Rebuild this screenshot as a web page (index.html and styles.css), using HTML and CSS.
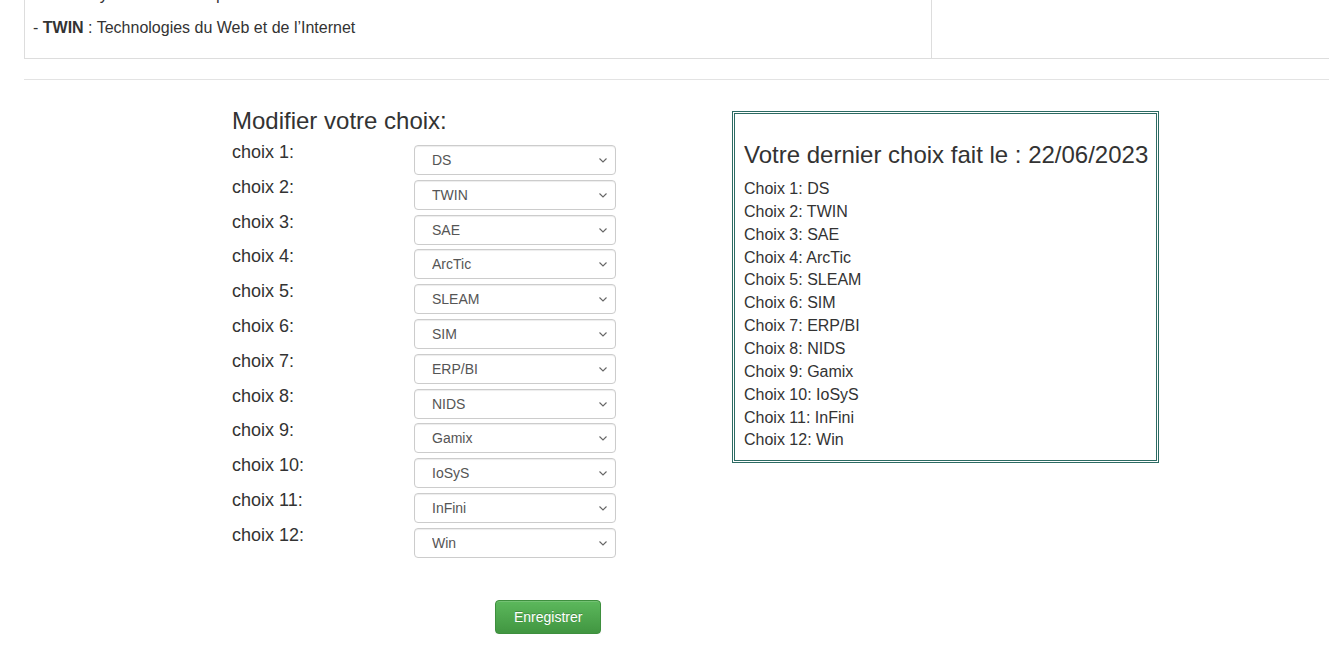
FILE: index.html
```html
<!DOCTYPE html>
<html lang="fr">
<head>
<meta charset="utf-8">
<title>Choix des options</title>
<link rel="stylesheet" href="styles.css">
</head>
<body>
<div class="page">
  <table class="info-table">
    <tr>
      <td class="info-cell">
        <p class="info-line">- <b>SAE</b> : Systèmes Embarqués</p>
        <p class="info-line">- <b>TWIN</b> : Technologies du Web et de l’Internet</p>
      </td>
      <td class="side-cell"></td>
    </tr>
  </table>
  <hr class="sep">
  <div class="main">
    <form class="choice-form">
      <h3 class="title">Modifier votre choix:</h3>
      <div class="row"><label class="lbl">choix 1:</label><span class="sel-wrap"><select class="sel"><option>DS</option></select><svg class="chev" viewBox="0 0 8 5" width="8" height="5"><path d="M0.5 0.5 L4 4 L7.5 0.5" fill="none" stroke="#666" stroke-width="1.1"/></svg></span></div>
      <div class="row"><label class="lbl">choix 2:</label><span class="sel-wrap"><select class="sel"><option>TWIN</option></select><svg class="chev" viewBox="0 0 8 5" width="8" height="5"><path d="M0.5 0.5 L4 4 L7.5 0.5" fill="none" stroke="#666" stroke-width="1.1"/></svg></span></div>
      <div class="row"><label class="lbl">choix 3:</label><span class="sel-wrap"><select class="sel"><option>SAE</option></select><svg class="chev" viewBox="0 0 8 5" width="8" height="5"><path d="M0.5 0.5 L4 4 L7.5 0.5" fill="none" stroke="#666" stroke-width="1.1"/></svg></span></div>
      <div class="row"><label class="lbl">choix 4:</label><span class="sel-wrap"><select class="sel"><option>ArcTic</option></select><svg class="chev" viewBox="0 0 8 5" width="8" height="5"><path d="M0.5 0.5 L4 4 L7.5 0.5" fill="none" stroke="#666" stroke-width="1.1"/></svg></span></div>
      <div class="row"><label class="lbl">choix 5:</label><span class="sel-wrap"><select class="sel"><option>SLEAM</option></select><svg class="chev" viewBox="0 0 8 5" width="8" height="5"><path d="M0.5 0.5 L4 4 L7.5 0.5" fill="none" stroke="#666" stroke-width="1.1"/></svg></span></div>
      <div class="row"><label class="lbl">choix 6:</label><span class="sel-wrap"><select class="sel"><option>SIM</option></select><svg class="chev" viewBox="0 0 8 5" width="8" height="5"><path d="M0.5 0.5 L4 4 L7.5 0.5" fill="none" stroke="#666" stroke-width="1.1"/></svg></span></div>
      <div class="row"><label class="lbl">choix 7:</label><span class="sel-wrap"><select class="sel"><option>ERP/BI</option></select><svg class="chev" viewBox="0 0 8 5" width="8" height="5"><path d="M0.5 0.5 L4 4 L7.5 0.5" fill="none" stroke="#666" stroke-width="1.1"/></svg></span></div>
      <div class="row"><label class="lbl">choix 8:</label><span class="sel-wrap"><select class="sel"><option>NIDS</option></select><svg class="chev" viewBox="0 0 8 5" width="8" height="5"><path d="M0.5 0.5 L4 4 L7.5 0.5" fill="none" stroke="#666" stroke-width="1.1"/></svg></span></div>
      <div class="row"><label class="lbl">choix 9:</label><span class="sel-wrap"><select class="sel"><option>Gamix</option></select><svg class="chev" viewBox="0 0 8 5" width="8" height="5"><path d="M0.5 0.5 L4 4 L7.5 0.5" fill="none" stroke="#666" stroke-width="1.1"/></svg></span></div>
      <div class="row"><label class="lbl">choix 10:</label><span class="sel-wrap"><select class="sel"><option>IoSyS</option></select><svg class="chev" viewBox="0 0 8 5" width="8" height="5"><path d="M0.5 0.5 L4 4 L7.5 0.5" fill="none" stroke="#666" stroke-width="1.1"/></svg></span></div>
      <div class="row"><label class="lbl">choix 11:</label><span class="sel-wrap"><select class="sel"><option>InFini</option></select><svg class="chev" viewBox="0 0 8 5" width="8" height="5"><path d="M0.5 0.5 L4 4 L7.5 0.5" fill="none" stroke="#666" stroke-width="1.1"/></svg></span></div>
      <div class="row"><label class="lbl">choix 12:</label><span class="sel-wrap"><select class="sel"><option>Win</option></select><svg class="chev" viewBox="0 0 8 5" width="8" height="5"><path d="M0.5 0.5 L4 4 L7.5 0.5" fill="none" stroke="#666" stroke-width="1.1"/></svg></span></div>
      <div class="actions"><button type="button" class="btn-save">Enregistrer</button></div>
    </form>
    <div class="last-box">
      <h3 class="box-title">Votre dernier choix fait le : 22/06/2023</h3>
      <div class="line">Choix 1: DS</div>
      <div class="line">Choix 2: TWIN</div>
      <div class="line">Choix 3: SAE</div>
      <div class="line">Choix 4: ArcTic</div>
      <div class="line">Choix 5: SLEAM</div>
      <div class="line">Choix 6: SIM</div>
      <div class="line">Choix 7: ERP/BI</div>
      <div class="line">Choix 8: NIDS</div>
      <div class="line">Choix 9: Gamix</div>
      <div class="line">Choix 10: IoSyS</div>
      <div class="line">Choix 11: InFini</div>
      <div class="line">Choix 12: Win</div>
    </div>
  </div>
</div>
</body>
</html>
```
FILE: styles.css
```css
html, body {
  margin: 0;
  padding: 0;
  overflow: hidden;
  background: #fff;
}
body {
  font-family: "Liberation Sans", Arial, sans-serif;
  font-size: 14px;
  line-height: 1.428571;
  color: #333;
}
.page {
  padding-left: 24px;
  width: 1400px;
}
.info-table {
  border-collapse: collapse;
  margin-top: -25px;
  width: 1376px;
}
.info-table td {
  border: 1px solid #ddd;
  vertical-align: top;
}
.info-cell {
  width: 890px;
  padding: 8px 8px 8px 8px;
}
.info-line {
  margin: 0 0 10px 0;
  font-size: 16px;
  line-height: 1.428571;
}
.side-cell {
  padding: 8px;
}
.sep {
  margin: 20px 0 0 0;
  border: 0;
  border-top: 1px solid #e3e3e3;
  height: 0;
}
.main {
  display: flex;
  align-items: flex-start;
  padding-top: 28px;
  padding-left: 208px;
}
.choice-form {
  width: 384px;
  margin: 0;
}
.title {
  font-size: 24px;
  font-weight: 400;
  line-height: 1.1;
  margin: 0 0 8px 0;
  color: #333;
}
.row {
  display: flex;
  align-items: flex-start;
  height: 34.8px;
}
.lbl {
  width: 182px;
  font-size: 18px;
  line-height: 20px;
  color: #333;
}
.sel-wrap {
  position: relative;
  display: block;
  width: 202px;
  height: 30px;
  margin-top: 3px;
}
.sel {
  display: block;
  width: 202px;
  height: 30px;
  padding: 4px 24px 4px 17px;
  font-family: "Liberation Sans", Arial, sans-serif;
  font-size: 14px;
  color: #555;
  background-color: #fff;
  border: 1px solid #ccc;
  border-radius: 4px;
  box-shadow: inset 0 1px 1px rgba(0,0,0,.075);
  -webkit-appearance: none;
  appearance: none;
  outline: none;
}
.chev {
  position: absolute;
  right: 9px;
  top: 13px;
  pointer-events: none;
}
.actions {
  padding-left: 263px;
  padding-top: 40px;
}
.btn-save {
  font-family: "Liberation Sans", Arial, sans-serif;
  font-size: 14px;
  line-height: 20px;
  padding: 6px 18px;
  color: #fff;
  border: 1px solid #3e8f3e;
  border-radius: 4px;
  background-color: #5cb85c;
  background-image: linear-gradient(to bottom, #5cb85c 0, #419641 100%);
  text-shadow: 0 -1px 0 rgba(0,0,0,.2);
  box-shadow: inset 0 1px 0 rgba(255,255,255,.15), 0 1px 1px rgba(0,0,0,.075);
  cursor: pointer;
}
.last-box {
  margin-left: 116px;
  margin-top: 3px;
  width: 427px;
  height: 352px;
  box-sizing: border-box;
  border: 3px double #2c6b63;
  padding: 28px 9px 8px 9px;
}
.box-title {
  font-size: 24px;
  font-weight: 400;
  line-height: 1.1;
  margin: 0 0 10px 0;
  color: #333;
  white-space: nowrap;
}
.line {
  font-size: 16px;
  line-height: 1.428571;
  color: #333;
}
```
